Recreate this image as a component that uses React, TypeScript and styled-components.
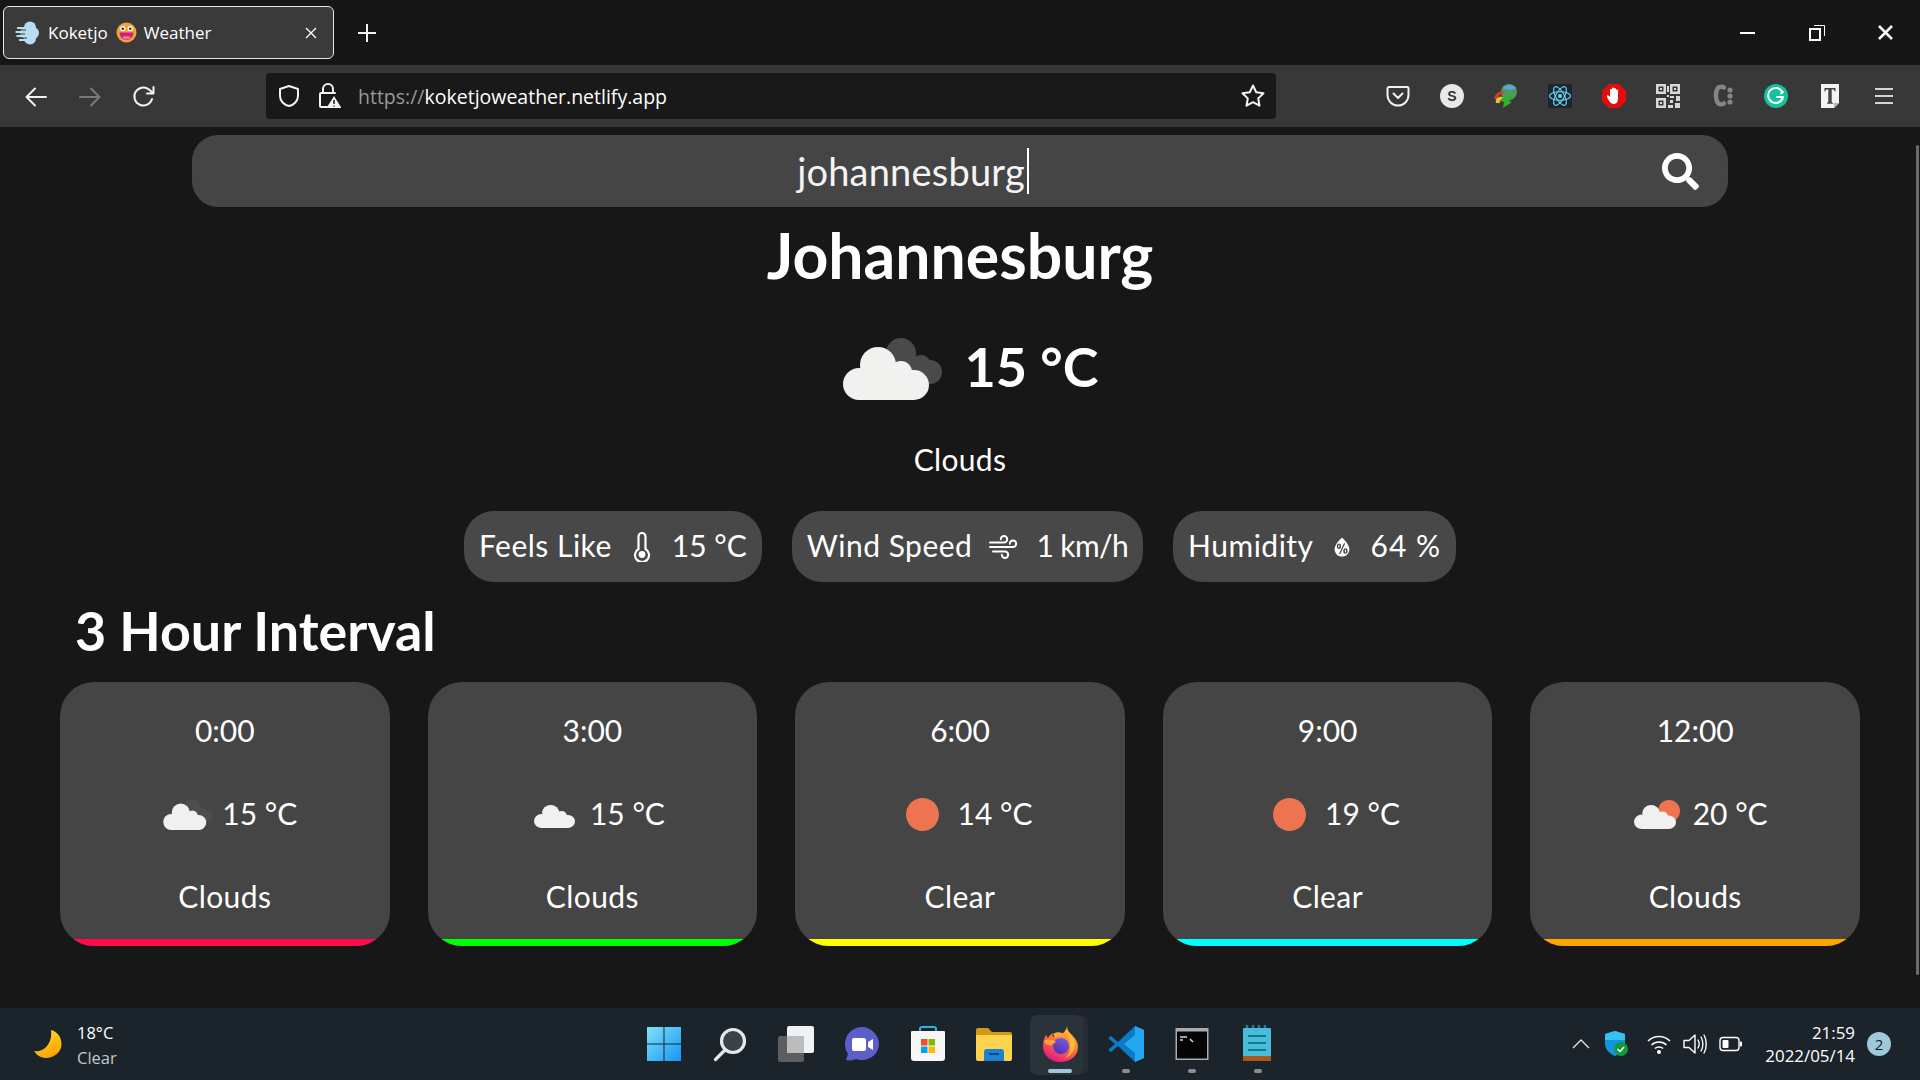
import * as React from "react";
import styled, { createGlobalStyle } from "styled-components";
import { FaSearch } from "react-icons/fa";
import { WiHumidity } from "react-icons/wi";

const GlobalStyle = createGlobalStyle`
  html, body { margin: 0; padding: 0; background: #171717; overflow: hidden; }
  * { box-sizing: border-box; }
`;

const APP_FONT = `"Lato", "Noto Sans", sans-serif`;
const SYSTEM_FONT = `"Open Sans", "Noto Sans", sans-serif`;

const Screen = styled.div`
  width: 1920px;
  height: 1080px;
  display: flex;
  flex-direction: column;
  color: #fff;
  font-family: ${APP_FONT};
`;

/* browser chrome */
const TabStrip = styled.div`
  height: 65px;
  flex: none;
  display: flex;
  align-items: flex-start;
  padding: 6px 0 0 3px;
  background: #161616;
`;

const Tab = styled.div`
  width: 331px;
  height: 53px;
  display: flex;
  align-items: center;
  padding: 0 11px;
  border: 1px solid #e8e8e8;
  border-radius: 6px;
  background: #3a3a3a;
  font: 17px/24px ${SYSTEM_FONT};
`;

const TabLabel = styled.span<{ $gap: number }>`
  margin-left: ${({ $gap }) => $gap}px;
`;

const TabEmoji = styled.span`
  margin-left: 8px;
  display: flex;
`;

const TabClose = styled.div`
  margin-left: auto;
  margin-right: 5px;
  display: flex;
`;

const NewTab = styled.div`
  width: 66px;
  height: 53px;
  display: flex;
  align-items: center;
  justify-content: center;
`;

const WindowControls = styled.div`
  margin: -6px 0 0 auto;
  display: flex;
`;

const WindowButton = styled.div`
  width: 69px;
  height: 65px;
  display: flex;
  align-items: center;
  justify-content: center;
`;

const Toolbar = styled.div`
  height: 62px;
  flex: none;
  display: flex;
  align-items: center;
  padding-left: 9px;
  background: #383838;
`;

const ToolButton = styled.div<{ $nav?: boolean }>`
  width: 54px;
  height: 46px;
  flex: none;
  display: flex;
  align-items: center;
  justify-content: center;
  padding-top: ${({ $nav }) => ($nav ? 2 : 0)}px;
`;

const UrlBar = styled.div`
  width: 1010px;
  height: 46px;
  margin: 0 95px;
  display: flex;
  align-items: center;
  padding: 0 0 0 3px;
  border-radius: 4px;
  background: #191919;
  font: 19.5px/26px ${SYSTEM_FONT};
`;

const UrlIcon = styled.div`
  width: 40px;
  display: flex;
  justify-content: center;
`;

const UrlText = styled.div`
  margin: 2px 0 0 9px;
  color: #fff;
  span {
    color: #9a9a9a;
  }
`;

const UrlStar = styled.div`
  margin-left: auto;
  width: 46px;
  display: flex;
  justify-content: center;
`;

/* weather page */
const Page = styled.main`
  position: relative;
  flex: 1;
  display: flex;
  flex-direction: column;
  align-items: center;
  padding-top: 8px;
  overflow: hidden;
  background: #171717;
`;

const ScrollThumb = styled.div`
  position: absolute;
  top: 18px;
  right: 1px;
  width: 3px;
  height: 830px;
  border-radius: 2px;
  background: #6a6a6a;
`;

const SearchBar = styled.div`
  width: 1536px;
  height: 72px;
  flex: none;
  display: flex;
  align-items: center;
  border-radius: 26px;
  background: #454545;
`;

const SearchField = styled.div`
  flex: 1;
  display: flex;
  justify-content: center;
  align-items: center;
  padding-left: 2px;
  font-size: 38px;
  line-height: 48px;
  letter-spacing: 0.2px;
  color: #f4f4f4;
`;

const Caret = styled.span`
  width: 2px;
  height: 46px;
  margin-left: 2px;
  background: #fff;
`;

const SearchIcon = styled.div`
  width: 96px;
  display: flex;
  justify-content: center;
`;

const City = styled.h1`
  margin: 14px 0 0;
  font-size: 62.500px;
  line-height: 68px;
  height: 70px;
  font-weight: 700;
`;

const Hero = styled.div`
  margin: 47px 0 0 21px;
  height: 62px;
  display: flex;
  align-items: center;
  gap: 23px;
  font-size: 54px;
  font-weight: 700;
`;

const HeroTemp = styled.span`
  margin-top: -6px;
`;

const Condition = styled.div`
  margin-top: 39px;
  height: 41px;
  font-size: 30px;
  line-height: 40px;
  letter-spacing: 0.3px;
`;

const Pills = styled.div`
  margin-top: 31px;
  display: flex;
  gap: 30px;
`;

const Pill = styled.div`
  height: 71px;
  display: flex;
  align-items: center;
  padding: 0 15px 4px;
  border-radius: 30px;
  background: #484848;
  font-size: 30px;
`;

const PillLabel = styled.span`
  letter-spacing: 0.5px;
`;

const PillValue = styled.span<{ $spacing?: number }>`
  letter-spacing: ${({ $spacing }) => $spacing ?? 0}px;
`;

const PillIcon = styled.span<{ $w: number }>`
  display: flex;
  width: ${({ $w }) => $w}px;
  justify-content: center;
  padding-top: 4px;
`;

const SectionTitle = styled.h2`
  align-self: flex-start;
  margin: 18px 0 0 75px;
  height: 62px;
  font-size: 53.800px;
  line-height: 60px;
  font-weight: 700;
`;

const Cards = styled.div`
  width: 100%;
  margin-top: 20px;
  padding: 0 60px;
  display: grid;
  grid-template-columns: repeat(5, 1fr);
  gap: 38px;
`;

const Card = styled.section`
  height: 264px;
  display: flex;
  flex-direction: column;
  align-items: center;
  padding-top: 28px;
  border-radius: 34px;
  overflow: hidden;
  background: #454545;
  font-size: 30px;
`;

const CardLine = styled.div`
  line-height: 40px;
`;

const CardTemp = styled.div`
  margin-top: 43px;
  height: 40px;
  display: flex;
  align-items: center;
  gap: 10px;
  line-height: 40px;
`;

const CardCondition = styled(CardLine)`
  margin-top: 43px;
  letter-spacing: 0.4px;
`;

const AccentBar = styled.div<{ $color: string }>`
  width: 100%;
  height: 7px;
  margin-top: auto;
  background: ${({ $color }) => $color};
`;

/* taskbar */
const Taskbar = styled.footer`
  height: 72px;
  flex: none;
  display: grid;
  grid-template-columns: 631px auto 1fr;
  background: #1b232b;
  font-family: ${SYSTEM_FONT};
`;

const Widget = styled.div`
  display: flex;
  align-items: center;
  padding-left: 33px;
  gap: 14px;
`;

const WidgetText = styled.div`
  padding-top: 2px;
  font-size: 16.500px;
  line-height: 25px;
  span {
    display: block;
    color: #c4c8cc;
  }
`;

const TaskIcons = styled.div`
  display: flex;
`;

const TaskIcon = styled.div<{ $active?: boolean }>`
  position: relative;
  width: 66px;
  display: flex;
  align-items: center;
  justify-content: center;
  &::before {
    content: "";
    display: ${({ $active }) => ($active ? "block" : "none")};
    position: absolute;
    left: 3px;
    right: 10px;
    top: 7px;
    bottom: 5px;
    border-radius: 7px;
    background: #2a323a;
    box-shadow: 6px 0 0 -1px #252c33;
  }
  svg {
    position: relative;
  }
`;

const RunDot = styled.i<{ $active?: boolean }>`
  position: absolute;
  left: 50%;
  bottom: 7px;
  width: ${({ $active }) => ($active ? 24 : 8)}px;
  height: 4px;
  transform: translateX(-50%);
  border-radius: 2px;
  background: ${({ $active }) => ($active ? "#9fc9da" : "#8b8f93")};
`;

const Tray = styled.div`
  display: flex;
  align-items: center;
  padding-left: 272px;
`;

const TrayIcon = styled.div<{ $after?: number }>`
  width: 36px;
  margin-right: ${({ $after }) => $after ?? 0}px;
  display: flex;
  justify-content: center;
`;

const Clock = styled.div`
  margin-left: 10px;
  width: 96px;
  text-align: right;
  font-size: 16.900px;
  line-height: 23px;
  white-space: nowrap;
`;

const Badge = styled.div`
  width: 24px;
  height: 24px;
  margin-left: 12px;
  display: flex;
  align-items: center;
  justify-content: center;
  border-radius: 50%;
  background: #9fc9da;
  color: #15191d;
  font-size: 15px;
`;

/* drawings */
const Svg = ({ s, h, children }: { s: number; h?: number; children: React.ReactNode }) => (
  <svg width={s} height={h ?? s} viewBox={`0 0 ${s} ${h ?? s}`} fill="none">
    {children}
  </svg>
);

const CloudFront = () => (
  <g fill="#f1f1ef">
    <circle cx="16" cy="46" r="16" />
    <circle cx="35" cy="27" r="18" />
    <circle cx="58" cy="34" r="11" />
    <circle cx="71" cy="47" r="15" />
    <rect x="16" y="32" width="55" height="30" />
  </g>
);

const CloudBack = ({ fill }: { fill: string }) => (
  <g fill={fill}>
    <circle cx="58" cy="15" r="15" />
    <circle cx="78" cy="27" r="10" />
    <circle cx="87" cy="34" r="12" />
    <circle cx="70" cy="32" r="14" />
  </g>
);

const HeroCloud = () => (
  <svg width="99" height="62" viewBox="0 0 99 62">
    <CloudBack fill="#4a4a4c" />
    <CloudFront />
  </svg>
);

type IconKind = "dark" | "plain" | "sun" | "partly";

// 60x50 slot in front of each card temperature
const CardIcon = ({ kind }: { kind: IconKind }) => (
  <svg width="60" height="50" viewBox="0 0 60 50">
    {kind === "sun" && <circle cx="34.500" cy="26.500" r="16.500" fill="#ee7350" />}
    {kind === "dark" && (
      <svg x="11" y="11" width="50" height="31" viewBox="0 0 99 62">
        <CloudBack fill="#4e4e50" />
        <CloudFront />
      </svg>
    )}
    {kind === "plain" && (
      <svg x="14" y="13" width="41" height="27" viewBox="0 0 86 62" preserveAspectRatio="none">
        <CloudFront />
      </svg>
    )}
    {kind === "partly" && (
      <>
        <circle cx="46" cy="23" r="11" fill="#ee7350" />
        <svg x="11" y="13" width="42" height="28" viewBox="0 0 86 62" preserveAspectRatio="none">
          <CloudFront />
        </svg>
      </>
    )}
  </svg>
);

const Favicon = () => (
  <Svg s={24}>
    <g fill="#b9dcf2">
      <circle cx="15" cy="6.500" r="6" />
      <circle cx="18" cy="12" r="6" />
      <circle cx="15" cy="17.500" r="6" />
      <circle cx="11" cy="12" r="6" />
    </g>
    <path d="M2 7h8M0.500 11h8M1.500 15h8M4 19h7" stroke="#b9dcf2" strokeWidth="1.800" />
    <path d="M2 9h9M2 13h8M3 17h9" stroke="#3a3a3a" strokeWidth="1.200" />
  </Svg>
);

const EmojiFace = () => (
  <Svg s={21}>
    <circle cx="10.500" cy="10.500" r="10" fill="#f0a33a" />
    <circle cx="6.800" cy="6.500" r="2.600" fill="#fff" />
    <circle cx="14.200" cy="6.500" r="2.600" fill="#fff" />
    <circle cx="6.800" cy="6.800" r="1.300" fill="#402a10" />
    <circle cx="14.200" cy="6.800" r="1.300" fill="#402a10" />
    <path d="M3.600 10.500h13.800c0 4.600-3 7.500-6.900 7.500s-6.900-2.900-6.900-7.500z" fill="#d01f7a" />
    <path d="M6 15.200c2.600-1.600 6.400-1.600 9 0-2.400 3-6.600 3-9 0z" fill="#f26fa8" />
  </Svg>
);

const Stroke = { stroke: "#f2f2f2", strokeWidth: 2, strokeLinecap: "round", strokeLinejoin: "round" } as const;

const ArrowLeft = () => (
  <Svg s={24}>
    <path d="M22 12H3M11 3.500 2.500 12l8.500 8.500" {...Stroke} />
  </Svg>
);

const ArrowRight = () => (
  <Svg s={24}>
    <path d="M2 12h19M13 3.500l8.500 8.500-8.500 8.500" {...Stroke} stroke="#7a7a7a" />
  </Svg>
);

const Reload = () => (
  <Svg s={24}>
    <path d="M20 14a9 9 0 1 1-3-9.500L21 8M21.500 2v6.500H15" {...Stroke} />
  </Svg>
);

const Shield = () => (
  <Svg s={24}>
    <path d="M12 2 3 5v7c0 5 4 9 9 10 5-1 9-5 9-10V5z" {...Stroke} />
  </Svg>
);

const Lock = () => (
  <Svg s={24} h={26}>
    <path d="M6 10V6a5 5 0 0 1 10 0v4M10 24H4a1 1 0 0 1-1-1V11a1 1 0 0 1 1-1h14" {...Stroke} />
    <path d="M17 13l7.500 12h-15z" fill="#f2f2f2" />
    <path d="M17 17v4M17 22.500v1" stroke="#191919" strokeWidth="1.500" />
  </Svg>
);

const Star = () => (
  <Svg s={26}>
    <path d="m13 2.500 3.200 6.800 7.300 1-5.300 5.100 1.300 7.300-6.500-3.500-6.500 3.500 1.300-7.300L2.500 10.300l7.300-1z" {...Stroke} />
  </Svg>
);

const Pocket = () => (
  <Svg s={24}>
    <path d="M3 3h18a1.500 1.500 0 0 1 1.500 1.500V11a10.500 10.500 0 0 1-21 0V4.500A1.500 1.500 0 0 1 3 3z" stroke="#f2f2f2" strokeWidth="2" />
    <path d="m7.500 9.500 4.500 4.500 4.500-4.500" {...Stroke} />
  </Svg>
);

const BadgeLetter = styled.text`
  font-family: "Liberation Sans", sans-serif;
  font-weight: 700;
`;

const Skype = () => (
  <Svg s={24}>
    <circle cx="12" cy="12" r="12" fill="#e8e8e8" />
    <BadgeLetter x="12" y="17" fontSize="14" textAnchor="middle" fill="#333">S</BadgeLetter>
  </Svg>
);

const Idm = () => (
  <Svg s={26}>
    <circle cx="16" cy="9" r="8" fill="#4f9a5e" />
    <path d="M10 5c3-4 10-4 13 0-3 2-9 2-13 0z" fill="#5aa6e0" />
    <path d="M1 16c1-6 6-9 10-7l-2 3c-2-1-4 1-4 4z" fill="#d63a2a" />
    <path d="M3 20c-1-4 2-7 7-6l1 3c-3-1-5 1-4 3z" fill="#e8c22a" />
    <path d="M11 13h11l-6 5 3 1-9 6 1-6-4-1z" fill="#2fae2f" />
  </Svg>
);

const ReactLogo = () => (
  <Svg s={24}>
    <rect width="24" height="24" rx="1" fill="#20232a" />
    <g stroke="#61dafb" strokeWidth="1.100" fill="none">
      <ellipse cx="12" cy="12" rx="10.500" ry="4.200" />
      <ellipse cx="12" cy="12" rx="10.500" ry="4.200" transform="rotate(60 12 12)" />
      <ellipse cx="12" cy="12" rx="10.500" ry="4.200" transform="rotate(120 12 12)" />
    </g>
    <circle cx="12" cy="12" r="2" fill="#61dafb" />
  </Svg>
);

const AdBlock = () => (
  <Svg s={24}>
    <path d="M7 0h10l7 7v10l-7 7H7l-7-7V7z" fill="#e40c0c" />
    <path d="M8 18c-2-2-3-5-3-6 0-1 1-1 2 0l1 1V6a1 1 0 0 1 2 0V4.500a1 1 0 0 1 2 0V5a1 1 0 0 1 2 0v1.500a1 1 0 0 1 2 0V14c0 3-1 6-4 6-2 0-3-1-4-2z" fill="#fff" />
  </Svg>
);

const Qr = () => (
  <Svg s={24}>
    <g fill="#d8d8d8">
      <path d="M0 0h10v10H0zM14 0h10v10H14zM0 14h10v10H0z" />
      <path d="M11 2h2v6h-2zM11 11h2v2h-2zM14 12h4v2h-4zM20 12h4v5h-4zM14 16h3v3h-3zM19 19h5v5h-5zM12 21h5v3h-5z" />
    </g>
    <path d="M2.500 2.500h5v5h-5zM16.500 2.500h5v5h-5zM2.500 16.500h5v5h-5z" fill="#383838" />
    <path d="M4 4h2v2H4zM18 4h2v2h-2zM4 18h2v2H4z" fill="#d8d8d8" />
  </Svg>
);

const CssIcon = () => (
  <Svg s={24}>
    <path d="M14 3.500c-1-1-5-1.500-6.500 1-2 3-2 11 0 14 1.500 2.500 5.500 2 6.500 1" stroke="#858585" strokeWidth="4.500" strokeLinecap="round" />
    <circle cx="20" cy="6" r="2.600" fill="#858585" />
    <circle cx="20" cy="12" r="2.600" fill="#858585" />
    <circle cx="20" cy="18" r="2.600" fill="#858585" />
  </Svg>
);

const Grammarly = () => (
  <Svg s={24}>
    <circle cx="12" cy="12" r="12" fill="#15c39a" />
    <path d="M18 7.500A7.500 7.500 0 1 0 19 13h-6" stroke="#fff" strokeWidth="2" strokeLinecap="round" />
    <path d="m16.500 10 3-2.500" stroke="#fff" strokeWidth="2" />
  </Svg>
);

const FontIcon = () => (
  <Svg s={24}>
    <path d="M3 0h18v19l-5 5H3z" fill="#f3f3f3" />
    <path d="M16 24v-5h5z" fill="#b0b0b0" />
    <path d="M6.500 4h11v3.500h-.8c-.3-1.300-1-2.200-3-2.200V18l1.300 1v.8H9v-.8l1.300-1V5.300c-2 0-2.700.9-3 2.200h-.8z" fill="#444" />
  </Svg>
);

const Hamburger = () => (
  <Svg s={22}>
    <path d="M2 4h18M2 11h18M2 18h18" stroke="#d4d4d4" strokeWidth="2" />
  </Svg>
);

const Minimize = () => (
  <Svg s={16}>
    <path d="M0 8h15" stroke="#fff" strokeWidth="2" />
  </Svg>
);

const Restore = () => (
  <Svg s={16}>
    <rect x="1" y="4" width="10" height="11" stroke="#fff" strokeWidth="2" />
    <path d="M5 .5h10.500V11" stroke="#fff" />
  </Svg>
);

const CloseX = ({ s = 15, w = 2.500 }: { s?: number; w?: number }) => (
  <Svg s={s}>
    <path d={`M1 1 ${s - 1} ${s - 1}M${s - 1} 1 1 ${s - 1}`} stroke="#fff" strokeWidth={w} />
  </Svg>
);

const Plus = () => (
  <Svg s={20}>
    <path d="M10 1v18M1 10h18" stroke="#f2f2f2" strokeWidth="2" />
  </Svg>
);

const Thermometer = () => (
  <Svg s={18} h={30}>
    <path d="M5.500 17V4.500a3.500 3.500 0 0 1 7 0V17a7 7 0 1 1-7 0z" stroke="#fff" strokeWidth="2.200" />
    <circle cx="9" cy="22.500" r="3.400" fill="#fff" />
  </Svg>
);

const WindLines = () => (
  <Svg s={30} h={24}>
    <path d="M1 7.500h14a3.200 3.200 0 1 0-3.200-3.200M1 12h23a3.200 3.200 0 1 0-3.200-3.200M4 16.500h12a3.200 3.200 0 1 1-3.200 3.200" stroke="#fff" strokeWidth="2" strokeLinecap="round" />
  </Svg>
);

const Moon = () => (
  <Svg s={30}>
    <defs>
      <linearGradient id="moon" x1="0" y1="0" x2="0.500" y2="1">
        <stop offset="0" stopColor="#ffe23a" />
        <stop offset="1" stopColor="#fda500" />
      </linearGradient>
    </defs>
    <path d="M18 1c8 2 12 10 10 18-3 8-13 12-20 9-3-1-5-3-7-6 9 2 19-7 17-21z" fill="url(#moon)" />
  </Svg>
);

const WinLogo = () => (
  <Svg s={36}>
    <defs>
      <linearGradient id="win" x1="0" y1="0" x2="1" y2="1">
        <stop offset="0" stopColor="#7fe3fb" />
        <stop offset="1" stopColor="#1594f5" />
      </linearGradient>
    </defs>
    <path d="M1 1h16.500v16.500H1zM18.500 1H35v16.500H18.500zM1 18.500h16.500V35H1zM18.500 18.500H35V35H18.500z" fill="url(#win)" />
  </Svg>
);

const SearchTask = () => (
  <Svg s={36}>
    <circle cx="21" cy="15" r="11.500" fill="#3a434b" stroke="#e6e8ea" strokeWidth="3.200" />
    <path d="M13 24 3.500 33.500" stroke="#e6e8ea" strokeWidth="3.200" strokeLinecap="round" />
  </Svg>
);

const TaskView = () => (
  <Svg s={38}>
    <rect x="1" y="11" width="26" height="26" rx="2" fill="#5e5e5e" />
    <rect x="10" y="1" width="27" height="27" rx="2" fill="#f1f1f1" />
    <rect x="10" y="11" width="17" height="17" fill="#bcbcbc" />
  </Svg>
);

const Chat = () => (
  <Svg s={36}>
    <path d="M18 1C8 1 1 9 1 18c0 4 1 7 3 10l-2 6c4 1 8 0 10-1 2 1 4 1 6 1 9 0 17-7 17-16S27 1 18 1z" fill="#5b5fc7" />
    <rect x="8" y="12" width="14" height="13" rx="2" fill="#fff" />
    <path d="m24 16 5-3v11l-5-3z" fill="#fff" />
  </Svg>
);

const Store = () => (
  <Svg s={36}>
    <path d="M10 6V3a2 2 0 0 1 2-2h12a2 2 0 0 1 2 2v3" stroke="#29b6e6" strokeWidth="2" />
    <path d="M2 5h32a1 1 0 0 1 1 1v26a3 3 0 0 1-3 3H4a3 3 0 0 1-3-3V6a1 1 0 0 1 1-1z" fill="#f6f6f6" />
    <path d="M11 13h6.500v6.500H11z" fill="#f25022" />
    <path d="M18.500 13H25v6.500h-6.500z" fill="#7fba00" />
    <path d="M11 20.500h6.500V27H11z" fill="#00a4ef" />
    <path d="M18.500 20.500H25V27h-6.500z" fill="#ffb900" />
  </Svg>
);

const Folder = () => (
  <Svg s={38}>
    <path d="M1 5a2 2 0 0 1 2-2h10l4 4h18a2 2 0 0 1 2 2v8H1z" fill="#d29a13" />
    <path d="M1 10h36v24a2 2 0 0 1-2 2H3a2 2 0 0 1-2-2z" fill="#fcd34f" />
    <path d="M9 36V27a3 3 0 0 1 3-3h14a3 3 0 0 1 3 3v9z" fill="#1d80d0" />
    <path d="M14 29h10" stroke="#0b4a8a" strokeWidth="2" />
  </Svg>
);

const Firefox = () => (
  <Svg s={38}>
    <defs>
      <linearGradient id="fx" x1="0.800" y1="0" x2="0.300" y2="1">
        <stop offset="0" stopColor="#ffd530" />
        <stop offset="0.500" stopColor="#ff7139" />
        <stop offset="1" stopColor="#e31587" />
      </linearGradient>
      <linearGradient id="fxc" x1="0.800" y1="0" x2="0.200" y2="1">
        <stop offset="0" stopColor="#7d5be0" />
        <stop offset="1" stopColor="#4a2fb0" />
      </linearGradient>
    </defs>
    <path d="M26 1c0 4 2 6 5 9 4 4 6 8 6 12 0 9-8 15-18 15S2 30 2 21c0-4 1-8 3-11l2 3c1-2 3-4 5-5-1 2-1 3 1 4 5-1 9-3 11-6 1-2 2-3 2-5z" fill="url(#fx)" />
    <circle cx="20" cy="21" r="8" fill="url(#fxc)" />
    <path d="M3 16c4-2 9-2 12 1l-5 3c-3 1-6-1-7-4zM12 9c4-3 10-2 13 2-4-1-8 0-11 2z" fill="#ffa436" />
    <path d="M27 8c4 3 7 8 7 13-1 6-5 10-10 12 4-3 6-8 5-13-.5-4-2-8-2-12z" fill="#ffb83a" />
  </Svg>
);

const VsCode = () => (
  <Svg s={38}>
    <path d="M28 1 37 5v28l-9 4L11 21l-7 6-3-2 7-6-7-6 3-2 7 6z" fill="#0a7ac6" />
    <path d="M28 1 37 5v28l-9 4zM28 10 17 19l11 9z" fill="#22a7f0" fillRule="evenodd" />
  </Svg>
);

const TerminalIcon = () => (
  <Svg s={34}>
    <rect x="0.500" y="1" width="33" height="32" fill="#a8adb1" />
    <rect x="2" y="4.500" width="30" height="27" fill="#050505" />
    <path d="M5 10h7M5 13h3M15 12l3 3" stroke="#d8d8d8" strokeWidth="1.500" />
  </Svg>
);

const Notepad = () => (
  <Svg s={38}>
    <rect x="4" y="3" width="28" height="33" rx="1" fill="#49bcd9" />
    <rect x="4" y="31" width="28" height="5" fill="#a9581c" />
    <path d="M8 3V0M14 3V0M20 3V0M26 3V0" stroke="#1f7c9a" strokeWidth="2.500" />
    <path d="M9 11h18M9 18h18M9 25h18" stroke="#16748f" strokeWidth="2.200" />
  </Svg>
);

const Chevron = () => (
  <Svg s={20}>
    <path d="m2 14 8-8 8 8" stroke="#e6e6e6" strokeWidth="1.300" />
  </Svg>
);

const DefenderShield = () => (
  <Svg s={26}>
    <path d="M11 0 1 3v9c0 7 5 11 10 13 5-2 10-6 10-13V3z" fill="#1593e0" />
    <path d="M11 0 1 3v6h20V3z" fill="#38c0f0" />
    <circle cx="17" cy="18" r="7" fill="#109b3d" />
    <path d="m13.500 18 2.500 2.500 4-4.500" stroke="#fff" strokeWidth="1.500" />
  </Svg>
);

const Wifi = () => (
  <Svg s={24}>
    <path d="M1 9c6-6 16-6 22 0M4.500 13c4-4 11-4 15 0M8 16.500c2-2 6-2 8 0" stroke="#fff" strokeWidth="1.500" />
    <circle cx="12" cy="20" r="2" fill="#fff" />
  </Svg>
);

const Volume = () => (
  <Svg s={24}>
    <path d="M1 8.500h5L12 3v18l-6-5.500H1z" stroke="#fff" strokeWidth="1.400" strokeLinejoin="round" />
    <path d="M15 8c1.500 2.500 1.500 5.500 0 8M18 5c2.500 4 2.500 10 0 14M21 3c3 5 3 13 0 18" stroke="#fff" strokeWidth="1.400" strokeLinecap="round" />
  </Svg>
);

const Battery = () => (
  <Svg s={24}>
    <rect x="1" y="5.500" width="19" height="13" rx="3" stroke="#fff" strokeWidth="1.400" />
    <rect x="3.500" y="8" width="6" height="8" rx="1" fill="#fff" />
    <path d="M21 9.500h1a1 1 0 0 1 1 1v3a1 1 0 0 1-1 1h-1z" fill="#fff" />
  </Svg>
);

const extensions = [Pocket, Skype, Idm, ReactLogo, AdBlock, Qr, CssIcon, Grammarly, FontIcon, Hamburger];

const forecast: { time: string; kind: IconKind; temp: string; label: string; color: string }[] = [
  { time: "0:00", kind: "dark", temp: "15 °C", label: "Clouds", color: "#ff0a4b" },
  { time: "3:00", kind: "plain", temp: "15 °C", label: "Clouds", color: "#00ff00" },
  { time: "6:00", kind: "sun", temp: "14 °C", label: "Clear", color: "#ffff00" },
  { time: "9:00", kind: "sun", temp: "19 °C", label: "Clear", color: "#00ffff" },
  { time: "12:00", kind: "partly", temp: "20 °C", label: "Clouds", color: "#ffa500" },
];

const taskApps = [
  { Icon: WinLogo },
  { Icon: SearchTask },
  { Icon: TaskView },
  { Icon: Chat },
  { Icon: Store },
  { Icon: Folder },
  { Icon: Firefox, active: true, running: true },
  { Icon: VsCode, running: true },
  { Icon: TerminalIcon, running: true },
  { Icon: Notepad, running: true },
];

const App = (): JSX.Element => {
  return (
    <Screen>
      <GlobalStyle />
      <TabStrip>
        <Tab>
          <Favicon />
          <TabLabel $gap={9}>Koketjo</TabLabel>
          <TabEmoji>
            <EmojiFace />
          </TabEmoji>
          <TabLabel $gap={7}>Weather</TabLabel>
          <TabClose>
            <CloseX s={12} w={1.300} />
          </TabClose>
        </Tab>
        <NewTab>
          <Plus />
        </NewTab>
        <WindowControls>
          <WindowButton>
            <Minimize />
          </WindowButton>
          <WindowButton>
            <Restore />
          </WindowButton>
          <WindowButton>
            <CloseX />
          </WindowButton>
        </WindowControls>
      </TabStrip>

      <Toolbar>
        <ToolButton $nav>
          <ArrowLeft />
        </ToolButton>
        <ToolButton $nav>
          <ArrowRight />
        </ToolButton>
        <ToolButton $nav>
          <Reload />
        </ToolButton>
        <UrlBar>
          <UrlIcon>
            <Shield />
          </UrlIcon>
          <UrlIcon>
            <Lock />
          </UrlIcon>
          <UrlText>
            <span>https://</span>koketjoweather.netlify.app
          </UrlText>
          <UrlStar>
            <Star />
          </UrlStar>
        </UrlBar>
        {extensions.map((Ext, i) => (
          <ToolButton key={i}>
            <Ext />
          </ToolButton>
        ))}
      </Toolbar>

      <Page>
        <ScrollThumb />
        <SearchBar>
          <SearchField>
            johannesburg
            <Caret />
          </SearchField>
          <SearchIcon>
            <FaSearch size={37} color="#fff" />
          </SearchIcon>
        </SearchBar>
        <City>Johannesburg</City>
        <Hero>
          <HeroCloud />
          <HeroTemp>15 °C</HeroTemp>
        </Hero>
        <Condition>Clouds</Condition>
        <Pills>
          <Pill>
            <PillLabel>Feels Like</PillLabel>
            <PillIcon $w={60}>
              <Thermometer />
            </PillIcon>
            <PillValue>15 °C</PillValue>
          </Pill>
          <Pill>
            <PillLabel>Wind Speed</PillLabel>
            <PillIcon $w={64}>
              <WindLines />
            </PillIcon>
            <PillValue $spacing={-0.6}>1 km/h</PillValue>
          </Pill>
          <Pill>
            <PillLabel>Humidity</PillLabel>
            <PillIcon $w={57}>
              <WiHumidity size={30} />
            </PillIcon>
            <PillValue $spacing={1}>64 %</PillValue>
          </Pill>
        </Pills>
        <SectionTitle>3 Hour Interval</SectionTitle>
        <Cards>
          {forecast.map((item) => (
            <Card key={item.time}>
              <CardLine>{item.time}</CardLine>
              <CardTemp>
                <CardIcon kind={item.kind} />
                {item.temp}
              </CardTemp>
              <CardCondition>{item.label}</CardCondition>
              <AccentBar $color={item.color} />
            </Card>
          ))}
        </Cards>
      </Page>

      <Taskbar>
        <Widget>
          <Moon />
          <WidgetText>
            18°C
            <span>Clear</span>
          </WidgetText>
        </Widget>
        <TaskIcons>
          {taskApps.map(({ Icon, active, running }, i) => (
            <TaskIcon key={i} $active={active}>
              <Icon />
              {running && <RunDot $active={active} />}
            </TaskIcon>
          ))}
        </TaskIcons>
        <Tray>
          <TrayIcon>
            <Chevron />
          </TrayIcon>
          <TrayIcon $after={6}>
            <DefenderShield />
          </TrayIcon>
          <TrayIcon>
            <Wifi />
          </TrayIcon>
          <TrayIcon>
            <Volume />
          </TrayIcon>
          <TrayIcon>
            <Battery />
          </TrayIcon>
          <Clock>
            21:59
            <br />
            2022/05/14
          </Clock>
          <Badge>2</Badge>
        </Tray>
      </Taskbar>
    </Screen>
  );
};

export default App;
